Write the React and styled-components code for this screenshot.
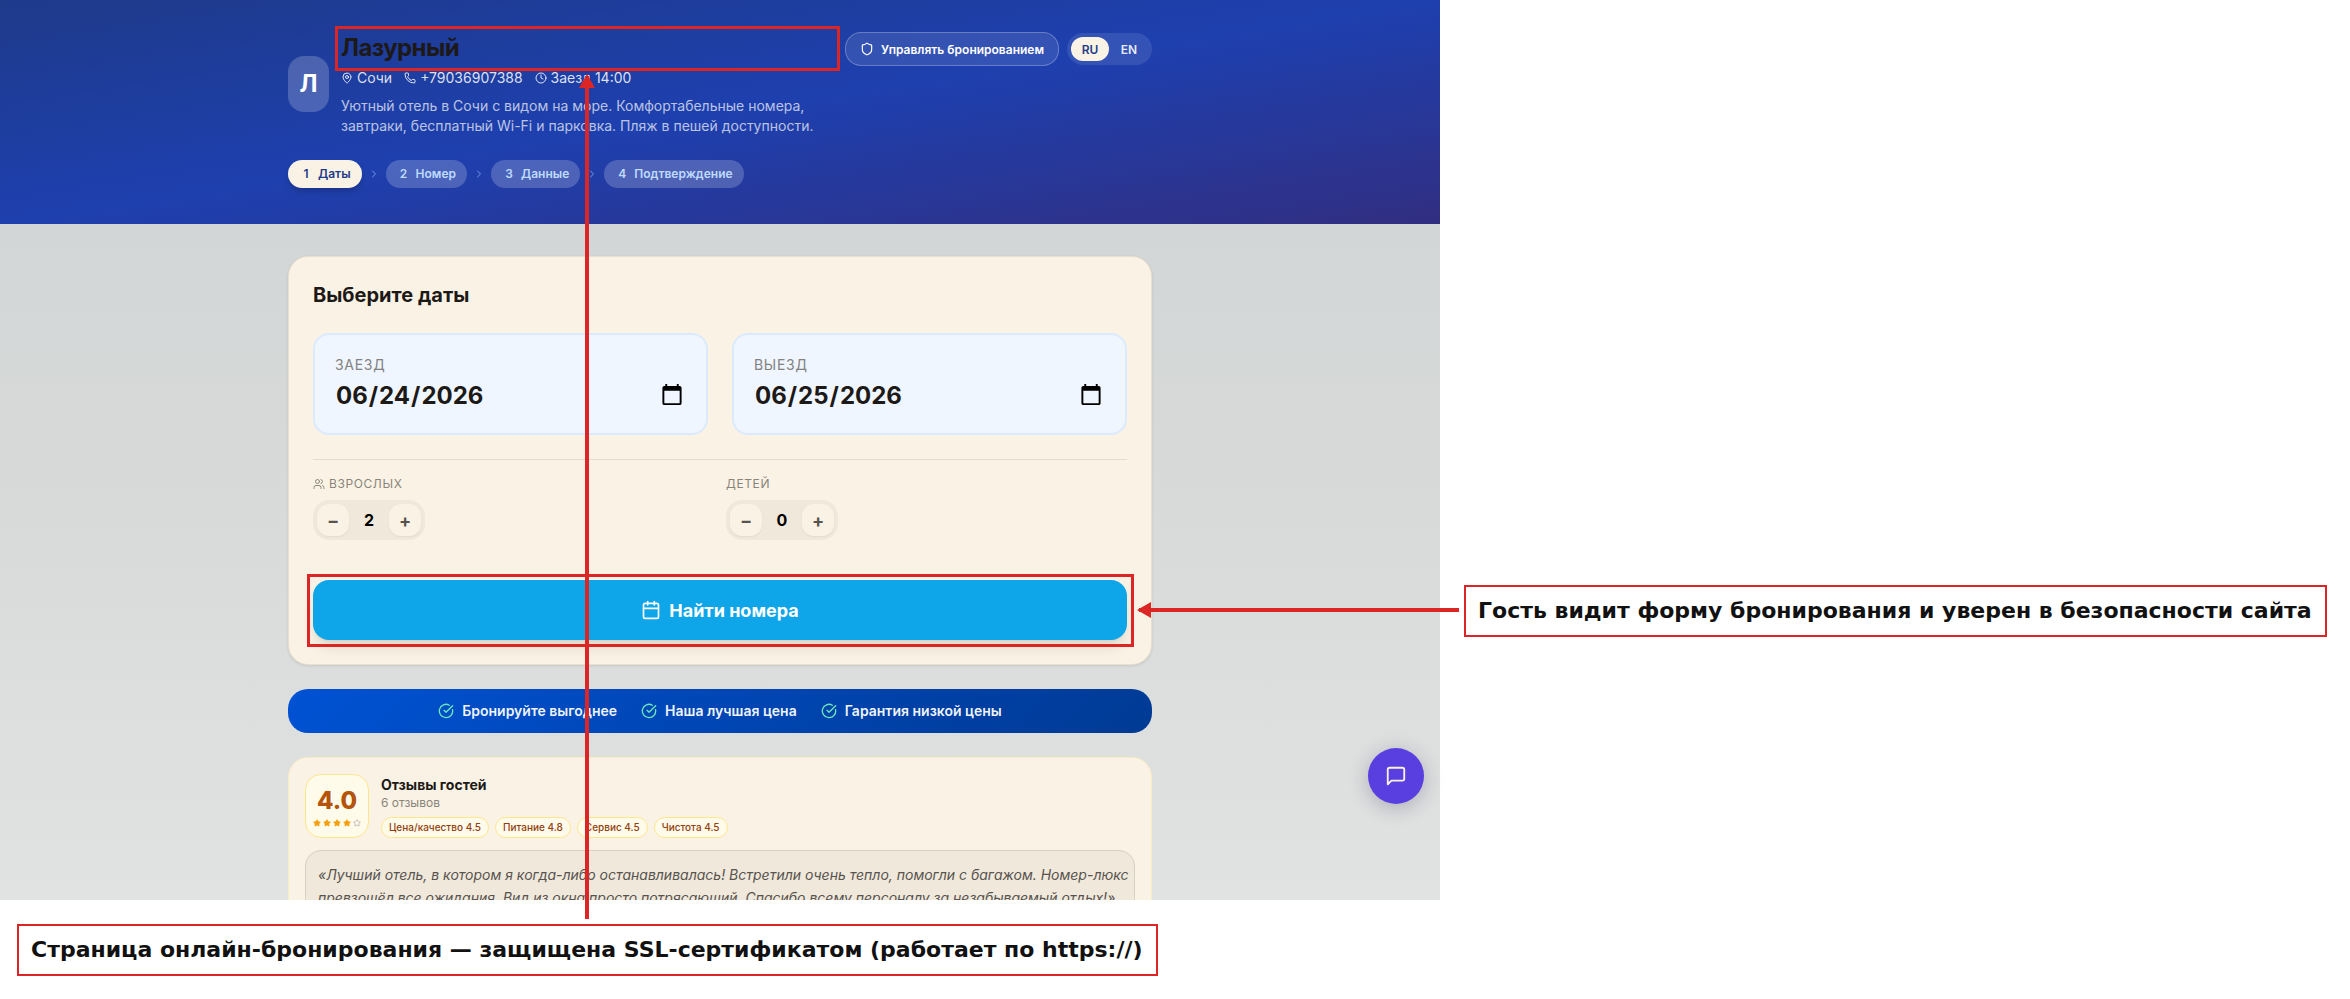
import React, { useState } from 'react';
import styled, { createGlobalStyle } from 'styled-components';
import {
    Calendar,
    ChevronRight,
    CircleCheckBig,
    Clock,
    MapPin,
    Phone,
    Shield,
    Star,
    Users,
} from 'lucide-react';

const GlobalStyle = createGlobalStyle`
    *, *::before, *::after {
        box-sizing: border-box;
    }
    body {
        margin: 0;
        background: #fff;
        font-family: Inter, "Liberation Sans", sans-serif;
        font-size: 14px;
        line-height: 20px;
        color: #1c1917;
    }
    h1, h2, h3, p {
        margin: 0;
    }
    button, input {
        font-family: inherit;
        letter-spacing: inherit;
    }
    button {
        cursor: pointer;
    }
`;

const Page = styled.div`
    display: grid;
    grid-template-columns: 144fr 91fr;
    grid-template-rows: minmax(0, 1fr) auto;
    height: 100vh;
    overflow: hidden;
`;

const Shot = styled.div`
    position: relative;
    min-width: 0;
    min-height: 0;
`;

const Screen = styled.div`
    height: 100%;
    overflow: hidden;
    background: linear-gradient(180deg, #cfd3d3 0%, #d7d9d9 50%, #e0e3e1 100%);
`;

const Container = styled.div`
    max-width: 896px;
    margin: 0 auto;
    padding: 0 16px;
`;

const Header = styled.header`
    padding: 32px 0 36px;
    background: linear-gradient(to bottom right, #1e3a8a, #1e40af, #312e81);
    color: #fff;
`;

const HeaderRow = styled.div`
    display: flex;
    align-items: flex-start;
    gap: 12px;
`;

const Hotel = styled.div`
    flex: 1;
    min-width: 0;
    display: flex;
    align-items: center;
    gap: 12px;
`;

const Avatar = styled.div`
    width: 41px;
    height: 56px;
    flex-shrink: 0;
    display: flex;
    align-items: center;
    justify-content: center;
    border-radius: 16px;
    background: rgba(255, 255, 255, 0.2);
    font-size: 24px;
    font-weight: 700;
`;

const HotelInfo = styled.div`
    flex: 1;
    min-width: 0;
`;

// Red frame drawn around the element the note points at
const Highlight = styled.div`
    position: relative;
    &::after {
        content: '';
        position: absolute;
        inset: -6px -7px -7px -6px;
        border: 3px solid #dc2626;
        pointer-events: none;
    }
`;

const HotelName = styled.h1`
    font-size: 24px;
    line-height: 32px;
    font-weight: 700;
    letter-spacing: -0.025em;
    color: #1c1917;
`;

const Meta = styled.div`
    display: flex;
    gap: 12px;
    margin-top: 4px;
    color: rgba(255, 255, 255, 0.85);
`;

const MetaItem = styled.span`
    display: flex;
    align-items: center;
    gap: 4px;
`;

const About = styled.p`
    margin-top: 8px;
    color: rgba(255, 255, 255, 0.7);
`;

const HeaderActions = styled.div`
    display: flex;
    align-items: center;
    gap: 8px;
`;

const ManageButton = styled.button`
    display: flex;
    align-items: center;
    gap: 7px;
    height: 34px;
    padding: 0 14px;
    border: 1px solid rgba(255, 255, 255, 0.25);
    border-radius: 16px;
    background: rgba(255, 255, 255, 0.1);
    color: #fff;
    font-size: 12px;
    font-weight: 600;
    white-space: nowrap;
`;

const LangSwitch = styled.div`
    display: flex;
    gap: 1px;
    padding: 4px;
    border-radius: 16px;
    background: rgba(255, 255, 255, 0.1);
`;

const LangButton = styled.button`
    min-width: 38px;
    height: 24px;
    padding: 0 10px;
    border: 0;
    border-radius: 12px;
    background: ${props => (props.$active ? '#faf3e5' : 'transparent')};
    color: ${props => (props.$active ? '#1e3a8a' : 'rgba(255, 255, 255, 0.9)')};
    font-size: 12px;
    font-weight: 600;
`;

const Steps = styled.div`
    display: flex;
    align-items: center;
    gap: 6px;
    margin-top: 24px;
    color: rgba(147, 197, 253, 0.7);
`;

const Step = styled.span`
    display: flex;
    align-items: center;
    gap: 5px;
    height: 28px;
    padding: 0 11px;
    border-radius: 14px;
    font-size: 12px;
    font-weight: 600;
    background: ${props => (props.$active ? '#faf3e5' : 'rgba(255, 255, 255, 0.2)')};
    color: ${props => (props.$active ? '#1e3a8a' : '#bfdbfe')};
    box-shadow: ${props => (props.$active ? '0 4px 6px -1px rgba(0, 0, 0, 0.2)' : 'none')};
`;

const StepNumber = styled.span`
    width: 14px;
    text-align: center;
`;

const Main = styled.main`
    display: flex;
    flex-direction: column;
    gap: 24px;
    padding-top: 32px;
`;

const SearchCard = styled.section`
    padding: 24px;
    border: 1px solid #e7dfd0;
    border-radius: 20px;
    background: #faf3e5;
    box-shadow: 0 1px 3px rgba(0, 0, 0, 0.1);
`;

const CardTitle = styled.h2`
    font-size: 20px;
    line-height: 28px;
    font-weight: 700;
`;

const DateGrid = styled.div`
    display: grid;
    grid-template-columns: 1fr 1fr;
    gap: 24px;
    padding: 24px 0;
    border-bottom: 1px solid #e3dbcd;
`;

const DateField = styled.label`
    display: flex;
    flex-direction: column;
    height: 102px;
    padding: 20px;
    border: 2px solid #dbeafe;
    border-radius: 16px;
    background: #eff6ff;
    color: #84827f;
    letter-spacing: 0.05em;
    text-transform: uppercase;
`;

const DateInput = styled.input`
    width: 100%;
    height: 40px;
    flex-shrink: 0;
    padding: 0;
    border: 0;
    outline: 0;
    background: transparent;
    color: #1c1917;
    font-size: 24px;
    font-weight: 700;
    letter-spacing: normal;
`;

const GuestGrid = styled.div`
    display: grid;
    grid-template-columns: 1fr 1fr;
    gap: 12px;
    padding: 16px 0 40px;
`;

const GuestLabel = styled.div`
    display: flex;
    align-items: center;
    gap: 4px;
    margin-bottom: 8px;
    color: #8a857b;
    font-size: 12px;
    line-height: 16px;
    letter-spacing: 0.05em;
    text-transform: uppercase;
`;

const Stepper = styled.div`
    display: inline-flex;
    align-items: center;
    padding: 4px;
    border-radius: 16px;
    background: #f0e8db;
`;

const StepperButton = styled.button`
    width: 32px;
    height: 32px;
    padding: 0;
    border: 0;
    border-radius: 12px;
    background: #faf3e5;
    color: #57534e;
    font-size: 18px;
    font-weight: 700;
    box-shadow: 0 1px 2px rgba(0, 0, 0, 0.06);
`;

const StepperValue = styled.output`
    width: 40px;
    color: #000;
    font-size: 16px;
    font-weight: 700;
    text-align: center;
`;

const SearchButton = styled.button`
    display: flex;
    align-items: center;
    justify-content: center;
    gap: 8px;
    width: 100%;
    height: 60px;
    border: 0;
    border-radius: 16px;
    background: #0ea5e9;
    color: #fff;
    font-size: 18px;
    font-weight: 700;
    box-shadow: 0 10px 15px -3px rgba(0, 0, 0, 0.1), 0 4px 6px -4px rgba(0, 0, 0, 0.1);
`;

const Perks = styled.div`
    display: flex;
    align-items: center;
    justify-content: center;
    gap: 24px;
    height: 44px;
    border-radius: 20px;
    background: linear-gradient(135deg, #0052d4 0%, #003a94 100%);
    color: rgba(255, 255, 255, 0.95);
    font-weight: 600;
`;

const Perk = styled.span`
    display: flex;
    align-items: center;
    gap: 8px;
    svg {
        color: #6ee7b7;
    }
`;

const Reviews = styled.section`
    padding: 16px;
    border: 1px solid #f8ecc2;
    border-radius: 20px;
    background: #faf3e5;
`;

const ReviewsHead = styled.div`
    display: flex;
    align-items: flex-end;
    gap: 12px;
`;

const Score = styled.div`
    display: flex;
    flex-direction: column;
    align-items: center;
    justify-content: center;
    gap: 6px;
    width: 64px;
    height: 64px;
    padding-top: 4px;
    border: 1px solid #fde68a;
    border-radius: 16px;
    background: #fffbeb;
    color: #b45309;
    font-size: 24px;
    line-height: 24px;
    font-weight: 800;
`;

const Stars = styled.div`
    display: flex;
    gap: 2px;
`;

const ReviewsTitle = styled.h3`
    font-size: 14px;
    line-height: 20px;
    font-weight: 700;
`;

const ReviewsCount = styled.p`
    color: #8a857b;
    font-size: 12px;
    line-height: 16px;
`;

const Chips = styled.div`
    display: flex;
    gap: 6px;
    margin-top: 6px;
`;

const Chip = styled.span`
    padding: 2px 7px;
    border: 1px solid #fde68a;
    border-radius: 11px;
    background: #fffbeb;
    color: #92400e;
    font-size: 10px;
    line-height: 15px;
    font-weight: 500;
`;

const Quote = styled.blockquote`
    margin: 12px 0 0;
    padding: 12px 0 12px 12px;
    border: 1px solid #d8d0c4;
    border-radius: 16px;
    background: #f0e8db;
    color: #57534e;
    font-style: italic;
    line-height: 23px;
`;

const ChatButton = styled.button`
    position: absolute;
    right: 16px;
    bottom: 96px;
    display: flex;
    align-items: center;
    justify-content: center;
    width: 56px;
    height: 56px;
    padding: 0;
    border: 0;
    border-radius: 50%;
    background: #5a3fe0;
    color: #faf3e5;
    box-shadow: 0 4px 20px rgba(30, 20, 80, 0.25);
`;

const Arrow = styled.div`
    position: absolute;
    background: #dc2626;
    &::before {
        content: '';
        position: absolute;
        background: #dc2626;
    }
`;

const ArrowUp = styled(Arrow)`
    left: calc(50% - 135px);
    top: 76px;
    bottom: -19px;
    width: 4px;
    &::before {
        left: -6px;
        top: -2px;
        width: 16px;
        height: 14px;
        clip-path: polygon(50% 0, 100% 100%, 0 100%);
    }
`;

const ArrowLeft = styled(Arrow)`
    left: calc(50% + 419px);
    right: -19px;
    top: 608px;
    height: 4px;
    &::before {
        left: -2px;
        top: -6px;
        width: 14px;
        height: 16px;
        clip-path: polygon(0 50%, 100% 0, 100% 100%);
    }
`;

const SideNotes = styled.aside`
    padding: 585px 0 0 24px;
`;

const FootNotes = styled.aside`
    grid-column: 1 / -1;
    padding: 24px 0 23px 17px;
`;

const Note = styled.p`
    width: fit-content;
    padding: 11px 13px 11px 12px;
    border: 2px solid #dc2626;
    background: #fff;
    color: #111;
    font-family: "DejaVu Sans", sans-serif;
    font-size: 22px;
    line-height: 26px;
    font-weight: 700;
    white-space: nowrap;
`;

const steps = ['Даты', 'Номер', 'Данные', 'Подтверждение'];
const perks = ['Бронируйте выгоднее', 'Наша лучшая цена', 'Гарантия низкой цены'];
const scores = ['Цена/качество 4.5', 'Питание 4.8', 'Сервис 4.5', 'Чистота 4.5'];

const MessageIcon = () => (
    <svg width="22" height="22" viewBox="0 0 24 24" fill="none" stroke="currentColor" strokeWidth="2" strokeLinecap="round" strokeLinejoin="round">
        <path d="M21 15a2 2 0 0 1-2 2H7l-4 4V5a2 2 0 0 1 2-2h14a2 2 0 0 1 2 2z" />
    </svg>
);

const GuestCounter = ({ label, icon, initial, min }) => {
    const [value, setValue] = useState(initial);

    return (
        <div>
            <GuestLabel>{icon}{label}</GuestLabel>
            <Stepper role="group" aria-label={label}>
                <StepperButton type="button" onClick={() => setValue(Math.max(min, value - 1))}>−</StepperButton>
                <StepperValue>{value}</StepperValue>
                <StepperButton type="button" onClick={() => setValue(value + 1)}>+</StepperButton>
            </Stepper>
        </div>
    );
};

const HotelHeader = () => {
    const [lang, setLang] = useState('RU');

    return (
        <Header>
            <Container>
                <HeaderRow>
                    <Hotel>
                        <Avatar>Л</Avatar>
                        <HotelInfo>
                            <Highlight>
                                <HotelName>Лазурный</HotelName>
                            </Highlight>
                            <Meta>
                                <MetaItem><MapPin size={12} />Сочи</MetaItem>
                                <MetaItem><Phone size={12} />+79036907388</MetaItem>
                                <MetaItem><Clock size={12} />Заезд 14:00</MetaItem>
                            </Meta>
                            <About>
                                Уютный отель в Сочи с видом на море. Комфортабельные номера, завтраки, бесплатный Wi-Fi и парковка. Пляж в пешей доступности.
                            </About>
                        </HotelInfo>
                    </Hotel>
                    <HeaderActions>
                        <ManageButton type="button"><Shield size={14} />Управлять бронированием</ManageButton>
                        <LangSwitch>
                            {['RU', 'EN'].map((code) => (
                                <LangButton key={code} type="button" $active={lang === code} onClick={() => setLang(code)}>
                                    {code}
                                </LangButton>
                            ))}
                        </LangSwitch>
                    </HeaderActions>
                </HeaderRow>
                <Steps>
                    {steps.map((step, i) => (
                        <React.Fragment key={step}>
                            {i > 0 && <ChevronRight size={12} />}
                            <Step $active={i === 0}>
                                <StepNumber>{i + 1}</StepNumber>
                                {step}
                            </Step>
                        </React.Fragment>
                    ))}
                </Steps>
            </Container>
        </Header>
    );
};

const SearchForm = () => {
    const [checkIn, setCheckIn] = useState('2026-06-24');
    const [checkOut, setCheckOut] = useState('2026-06-25');

    return (
        <SearchCard>
            <CardTitle>Выберите даты</CardTitle>
            <DateGrid>
                <DateField>
                    Заезд
                    <DateInput type="date" value={checkIn} onChange={(e) => setCheckIn(e.target.value)} />
                </DateField>
                <DateField>
                    Выезд
                    <DateInput type="date" value={checkOut} onChange={(e) => setCheckOut(e.target.value)} />
                </DateField>
            </DateGrid>
            <GuestGrid>
                <GuestCounter label="Взрослых" icon={<Users size={12} />} initial={2} min={1} />
                <GuestCounter label="Детей" initial={0} min={0} />
            </GuestGrid>
            <Highlight>
                <SearchButton type="button"><Calendar size={20} />Найти номера</SearchButton>
            </Highlight>
        </SearchCard>
    );
};

const GuestReviews = () => (
    <Reviews>
        <ReviewsHead>
            <Score>
                4.0
                <Stars>
                    {[1, 2, 3, 4, 5].map((n) => (
                        <Star key={n} size={8} color={n <= 4 ? '#f59e0b' : '#a8a29e'} fill={n <= 4 ? '#f59e0b' : 'none'} />
                    ))}
                </Stars>
            </Score>
            <div>
                <ReviewsTitle>Отзывы гостей</ReviewsTitle>
                <ReviewsCount>6 отзывов</ReviewsCount>
                <Chips>
                    {scores.map((score) => <Chip key={score}>{score}</Chip>)}
                </Chips>
            </div>
        </ReviewsHead>
        <Quote>
            «Лучший отель, в котором я когда-либо останавливалась! Встретили очень тепло, помогли с багажом. Номер-люкс превзошёл все ожидания. Вид из окна просто потрясающий. Спасибо всему персоналу за незабываемый отдых!»
        </Quote>
    </Reviews>
);

const App = () => (
    <>
        <GlobalStyle />
        <Page>
            <Shot>
                <Screen>
                    <HotelHeader />
                    <Container>
                        <Main>
                            <SearchForm />
                            <Perks>
                                {perks.map((perk) => (
                                    <Perk key={perk}><CircleCheckBig size={16} />{perk}</Perk>
                                ))}
                            </Perks>
                            <GuestReviews />
                        </Main>
                    </Container>
                </Screen>
                <ChatButton type="button" aria-label="Чат"><MessageIcon /></ChatButton>
                <ArrowUp />
                <ArrowLeft />
            </Shot>
            <SideNotes>
                <Note>Гость видит форму бронирования и уверен в безопасности сайта</Note>
            </SideNotes>
            <FootNotes>
                <Note>Страница онлайн-бронирования — защищена SSL-сертификатом (работает по https://)</Note>
            </FootNotes>
        </Page>
    </>
);

export default App;
